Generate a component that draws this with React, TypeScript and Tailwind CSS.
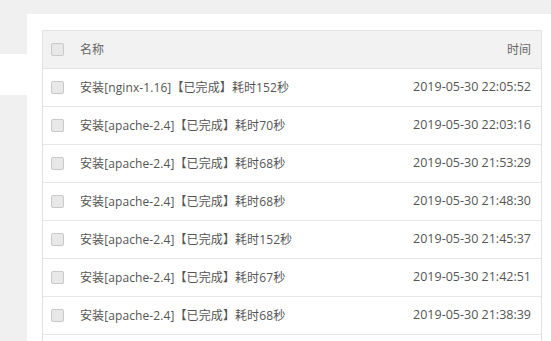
import React from "react";

const rows = [
  ["安装[nginx-1.16]【已完成】耗时152秒", "2019-05-30 22:05:52"],
  ["安装[apache-2.4]【已完成】耗时70秒", "2019-05-30 22:03:16"],
  ["安装[apache-2.4]【已完成】耗时68秒", "2019-05-30 21:53:29"],
  ["安装[apache-2.4]【已完成】耗时68秒", "2019-05-30 21:48:30"],
  ["安装[apache-2.4]【已完成】耗时152秒", "2019-05-30 21:45:37"],
  ["安装[apache-2.4]【已完成】耗时67秒", "2019-05-30 21:42:51"],
  ["安装[apache-2.4]【已完成】耗时68秒", "2019-05-30 21:38:39"],
];

function Box() {
  return <div className="w-[13px] h-[13px] border border-[#c9c9c9] bg-[#e8e8e8] rounded-[2px] shrink-0" />;
}

export default function App() {
  return (
    <div
      className="w-[551px] h-[341px] overflow-hidden bg-[#f0f0f0] flex flex-col"
      style={{ fontFamily: '"Open Sans", "Noto Sans CJK SC", sans-serif' }}
    >
      <div className="h-[14px] shrink-0" />
      <div className="flex flex-1 min-h-0">
        <div className="w-[27px] shrink-0 flex flex-col">
          <div className="h-[40px]" />
          <div className="h-[41px] bg-white" />
        </div>
        <div className="flex-1 bg-white pt-[16px] pl-[15px] pr-[9px]">
          <div className="border border-[#e2e2e2] text-[12px]">
            <div className="h-[38px] bg-[#f2f2f2] flex items-center border-b border-[#e2e2e2]">
              <div className="w-[37px] pl-[8px] flex items-center"><Box /></div>
              <div className="flex-1 text-[#666]">名称</div>
              <div className="pr-[10px] text-[#666]">时间</div>
            </div>
            {rows.map(([n, t], i) => (
              <div key={i} className="h-[38px] flex items-center border-b border-[#e6e6e6] text-[#555]">
                <div className="w-[37px] pl-[8px] flex items-center"><Box /></div>
                <div className="flex-1 tracking-[0.1px]">{n}</div>
                <div className="pr-[10px] text-[12.5px]">{t}</div>
              </div>
            ))}
            <div className="h-[38px]" />
          </div>
        </div>
      </div>
    </div>
  );
}
